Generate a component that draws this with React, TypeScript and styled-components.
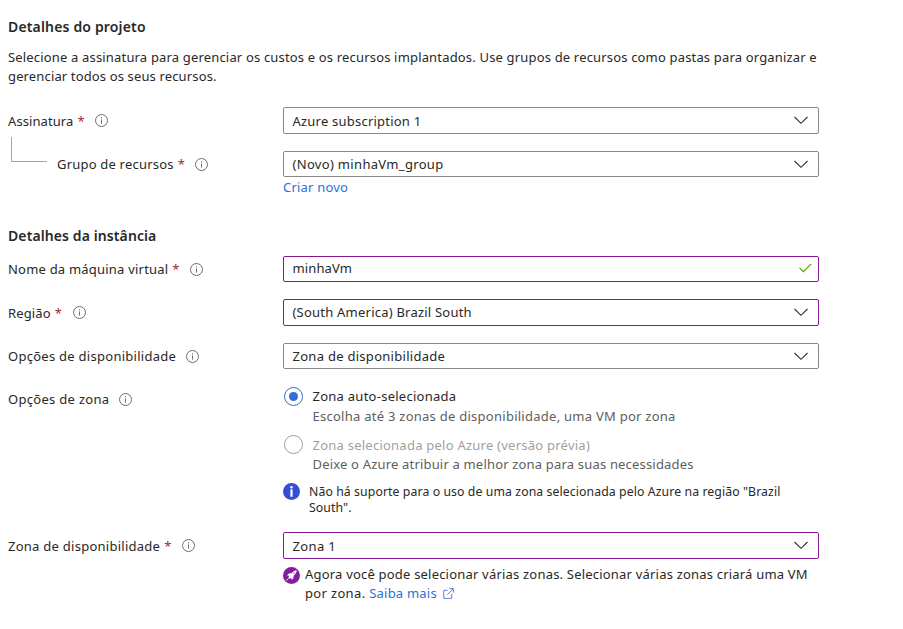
import React from 'react';
import styled, { createGlobalStyle, css } from 'styled-components';

const GlobalStyle = createGlobalStyle`
  * { box-sizing: border-box; }
  body {
    margin: 0;
    background: #fff;
    color: #292827;
    font-family: 'Noto Sans', 'Open Sans', sans-serif;
    font-size: 13px;
    line-height: 19px;
  }
`;

/* Letter spacing in pixels, tuned to each string. */
type Tracked = { $track?: number };
const tracking = css<Tracked>`
  letter-spacing: ${p => p.$track ?? 0}px;
  white-space: nowrap;
`;

const Page = styled.main`
  width: 903px;
  height: 629px;
  padding: 17px 0 0 8px;
  overflow: hidden;
`;

const Heading = styled.h2<Tracked>`
  margin: 0;
  height: 20px;
  font-size: 14px;
  font-weight: 600;
  line-height: 20px;
  ${tracking}
`;

const Intro = styled.p`
  margin: 11px 0 21px;
`;

const Line = styled.span<Tracked>`
  display: block;
  ${tracking}
`;

const Section = styled.section<{ $top?: number }>`
  margin-top: ${p => p.$top ?? 0}px;
`;

const Row = styled.div<{ $top?: number }>`
  display: grid;
  grid-template-columns: 275px 536px;
  margin-top: ${p => p.$top ?? 0}px;
`;

const LabelCell = styled.div<{ $nested?: boolean }>`
  display: flex;
  align-items: center;
  height: 27px;
  padding-left: ${p => (p.$nested ? 49 : 0)}px;
  position: relative;
`;

const Branch = styled.i`
  position: absolute;
  left: 3px;
  top: -14px;
  width: 36px;
  height: 25px;
  border: solid #a6a5a4;
  border-width: 0 0 1px 1px;
`;

type Nudge = 'low' | 'high';
const nudged = css<{ $nudge?: Nudge }>`
  padding-top: ${p => (p.$nudge === 'low' ? 2 : 0)}px;
  padding-bottom: ${p => (p.$nudge === 'high' ? 2 : 0)}px;
`;

const LabelText = styled.span<Tracked & { $nudge?: Nudge }>`
  ${nudged}
  ${tracking}
`;

const Required = styled.span<{ $nudge?: Nudge }>`
  width: 6px;
  margin-left: 4px;
  color: #a4262c;
  ${nudged}
`;

const InfoSvg = styled.svg<{ $gap?: number }>`
  display: block;
  flex: none;
  width: 13px;
  height: 13px;
  margin-left: ${p => p.$gap ?? 12}px;
`;

const Box = styled.div<{ $tall?: boolean; $dirty?: boolean }>`
  display: flex;
  align-items: center;
  justify-content: space-between;
  height: ${p => (p.$tall ? 27 : 26)}px;
  padding: 0 10px 0 8.5px;
  border: 1px solid ${p => (p.$dirty ? '#881798' : '#8a8886')};
  border-radius: 2px;
`;

const Glyph = styled.svg`
  display: block;
  flex: none;
`;

const CheckGlyph = styled(Glyph)`
  margin: 0 -4px 2px 0;
`;

const Link = styled.a<Tracked>`
  color: #2f6fd6;
  text-decoration: none;
  ${tracking}
`;

const Below = styled.div`
  height: 19px;
  line-height: 19px;
  margin-top: 1px;
`;

const Option = styled.div<{ $height: number }>`
  display: grid;
  grid-template-columns: 29.5px 1fr;
  height: ${p => p.$height}px;
`;

const OptionText = styled.div`
  padding-top: 1px;
`;

const Radio = styled.span<{ $on?: boolean }>`
  display: flex;
  align-items: center;
  justify-content: center;
  width: 19px;
  height: 19px;
  margin-left: 1px;
  border: 1px solid ${p => (p.$on ? '#2f6fd6' : '#a19f9d')};
  border-radius: 50%;
  margin-top: ${p => (p.$on ? 1 : 0)}px;

  &::after {
    content: '';
    width: 9px;
    height: 9px;
    border-radius: 50%;
    background: ${p => (p.$on ? '#2f6fd6' : 'transparent')};
  }
`;

const OptionTitle = styled.span<Tracked & { $disabled?: boolean }>`
  display: block;
  height: ${p => (p.$disabled ? 19 : 20)}px;
  color: ${p => (p.$disabled ? '#a19f9d' : '#292827')};
  ${tracking}
`;

const OptionHint = styled.span<Tracked>`
  display: block;
  color: #605e5c;
  ${tracking}
`;

const SupportNote = styled.div`
  display: grid;
  grid-template-columns: 26px 1fr;
  height: 33px;
  font-size: 12.25px;
  line-height: 16px;
`;

const NoteText = styled.div`
  padding-top: 1px;
`;

const FeatureNote = styled.div`
  display: grid;
  grid-template-columns: 22px 1fr;
  margin-top: 6px;
`;

const InfoIcon = ({ gap }: { gap?: number }) => (
  <InfoSvg $gap={gap} viewBox="0 0 13 13" fill="none" stroke="#605e5c">
    <circle cx="6.5" cy="6.5" r="6" strokeWidth="0.9" />
    <path d="M6.5 5.4v4.2M6.5 3.2v1.2" strokeWidth="0.9" />
  </InfoSvg>
);

const Chevron = () => (
  <Glyph width="14" height="9" viewBox="0 0 14 9" fill="none" stroke="#323130" strokeWidth="1.1">
    <path d="M0.5 1L7 7.3L13.5 1" />
  </Glyph>
);

const Check = () => (
  <CheckGlyph width="13" height="10" viewBox="0 0 13 10" fill="none" stroke="#57a300" strokeWidth="1.2">
    <path d="M0.5 4.8L4.4 8.7L12.3 0.8" />
  </CheckGlyph>
);

const InfoBadge = () => (
  <Glyph width="17" height="17" viewBox="0 0 17 17">
    <circle cx="8.5" cy="8.5" r="8.5" fill="#324fd8" />
    <circle cx="8.5" cy="4.2" r="1.3" fill="#fff" />
    <rect x="7.4" y="6.4" width="2.2" height="7.4" fill="#fff" />
  </Glyph>
);

const RocketGlyph = styled(Glyph)`
  margin-top: 2px;
`;

const RocketBadge = () => (
  <RocketGlyph width="17" height="17" viewBox="0 0 17 17">
    <circle cx="8.5" cy="8.5" r="8.5" fill="#881ba0" />
    <path
      fill="#fff"
      d="M13.8 3.2C11.6 3.4 9.8 4.6 8.4 6.3L5.8 6.6L4 8.6L6.4 8.8L5.4 10.4L6.7 11.7L8.3 10.7L8.4 13.1L10.4 11.3L10.7 8.7C12.5 7.2 13.6 5.4 13.8 3.2Z"
    />
    <path d="M5.6 11.3L3.4 13.5" stroke="#fff" strokeWidth="1" />
    <circle cx="10.9" cy="6.1" r="0.7" fill="#881ba0" />
  </RocketGlyph>
);

const ExternalSvg = styled.svg`
  display: inline-block;
  margin-left: 6px;
  vertical-align: -1px;
`;

const ExternalIcon = () => (
  <ExternalSvg width="11" height="11" viewBox="0 0 12 12" fill="none" stroke="#4f6bed">
    <path d="M5 2.5H0.8V11.3H9.5V6.5M7 0.7H11.3V5M11.3 0.7L4.8 7.2" />
  </ExternalSvg>
);

type FieldLabelProps = {
  text: string;
  track?: number;
  required?: boolean;
  nested?: boolean;
  nudge?: Nudge;
  gap?: number;
};

const FieldLabel = ({ text, track, required, nested, nudge, gap }: FieldLabelProps) => (
  <LabelCell $nested={nested}>
    {nested && <Branch />}
    <LabelText $track={track} $nudge={nudge}>
      {text}
    </LabelText>
    {required && <Required $nudge={nudge}>*</Required>}
    <InfoIcon gap={gap} />
  </LabelCell>
);

type FieldProps = {
  value: string;
  track?: number;
  tall?: boolean;
  nudge?: Nudge;
  dirty?: boolean;
  valid?: boolean;
};

const Field = ({ value, track, tall, nudge, dirty, valid }: FieldProps) => (
  <Box $tall={tall} $dirty={dirty}>
    <LabelText $track={track} $nudge={nudge}>
      {value}
    </LabelText>
    {valid ? <Check /> : <Chevron />}
  </Box>
);

export default function App() {
  return (
    <>
      <GlobalStyle />
      <Page>
        <Section>
          <Heading $track={0.16}>Detalhes do projeto</Heading>
          <Intro>
            <Line $track={0.17}>
              Selecione a assinatura para gerenciar os custos e os recursos implantados. Use grupos de recursos como
              pastas para organizar e
            </Line>
            <Line $track={0.14}>gerenciar todos os seus recursos.</Line>
          </Intro>
          <Row>
            <FieldLabel text="Assinatura" track={0.08} required nudge="low" />
            <Field value="Azure subscription 1" track={0.22} tall nudge="low" />
          </Row>
          <Row $top={17}>
            <FieldLabel text="Grupo de recursos" track={0.2} required nested gap={11} />
            <div>
              <Field value="(Novo) minhaVm_group" track={0.32} />
              <Below>
                <Link $track={0.2}>Criar novo</Link>
              </Below>
            </div>
          </Row>
        </Section>

        <Section $top={29}>
          <Heading $track={0.1}>Detalhes da instância</Heading>
          <Row $top={10}>
            <FieldLabel text="Nome da máquina virtual" track={0.21} required />
            <Field value="minhaVm" track={0.12} nudge="high" dirty valid />
          </Row>
          <Row $top={16}>
            <FieldLabel text="Região" track={0.15} required nudge="low" />
            <Field value="(South America) Brazil South" track={0.22} tall dirty />
          </Row>
          <Row $top={17}>
            <FieldLabel text="Opções de disponibilidade" track={0.27} gap={10} />
            <Field value="Zona de disponibilidade" track={0.28} />
          </Row>
          <Row $top={16}>
            <FieldLabel text="Opções de zona" track={0.3} gap={10} />
            <div>
              <Option $height={49}>
                <Radio $on />
                <OptionText>
                  <OptionTitle $track={0.26}>Zona auto-selecionada</OptionTitle>
                  <OptionHint $track={0.26}>Escolha até 3 zonas de disponibilidade, uma VM por zona</OptionHint>
                </OptionText>
              </Option>
              <Option $height={48}>
                <Radio />
                <OptionText>
                  <OptionTitle $disabled $track={0.24}>
                    Zona selecionada pelo Azure (versão prévia)
                  </OptionTitle>
                  <OptionHint $track={0.18}>Deixe o Azure atribuir a melhor zona para suas necessidades</OptionHint>
                </OptionText>
              </Option>
              <SupportNote>
                <InfoBadge />
                <NoteText>
                  <Line $track={0.1}>
                    Não há suporte para o uso de uma zona selecionada pelo Azure na região "Brazil
                  </Line>
                  <Line $track={0.1}>South".</Line>
                </NoteText>
              </SupportNote>
            </div>
          </Row>
          <Row $top={16}>
            <FieldLabel text="Zona de disponibilidade" track={0.26} required nudge="low" />
            <div>
              <Field value="Zona 1" track={0.35} tall nudge="low" dirty />
              <FeatureNote>
                <RocketBadge />
                <div>
                  <Line $track={0.2}>
                    Agora você pode selecionar várias zonas. Selecionar várias zonas criará uma VM
                  </Line>
                  <Line $track={0.34}>
                    por zona. <Link $track={0.22}>Saiba mais</Link>
                    <ExternalIcon />
                  </Line>
                </div>
              </FeatureNote>
            </div>
          </Row>
        </Section>
      </Page>
    </>
  );
}
